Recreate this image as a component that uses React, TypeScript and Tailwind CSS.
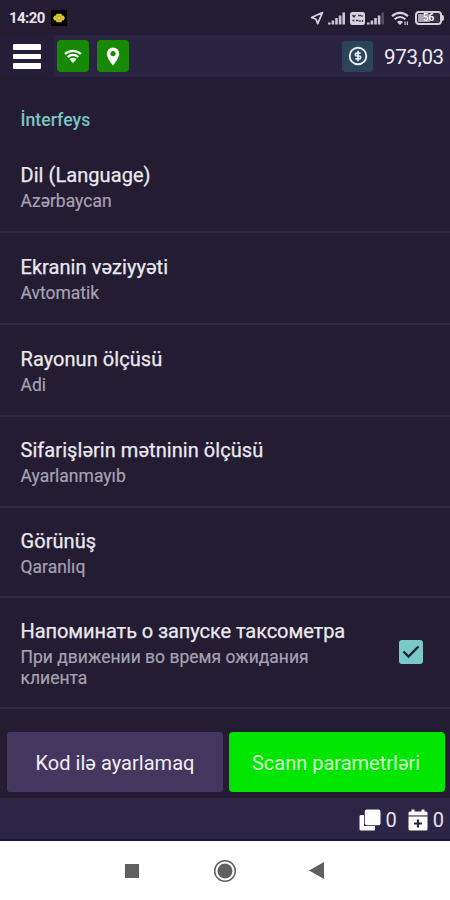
import React from "react";

const settings = [
  { title: "Dil (Language)", value: "Azərbaycan", row: "h-[92px] pt-[21px]" },
  { title: "Ekranin vəziyyəti", value: "Avtomatik", row: "h-[92px] pt-[21px]" },
  { title: "Rayonun ölçüsü", value: "Adi", row: "h-[92px] pt-[21px]" },
  { title: "Sifarişlərin mətninin ölçüsü", value: "Ayarlanmayıb", row: "h-[91px] pt-[20px]" },
  { title: "Görünüş", value: "Qaranlıq", row: "h-[90px] pt-[20px]" },
];

function SignalIcon({ weak }: { weak?: boolean }) {
  return (
    <svg width="18" height="13" viewBox="0 0 18 13" fill="#c9c5d3">
      <rect x="0" y="10.5" width="2.6" height="2" />
      <rect x="3.6" y="8.5" width="2.6" height="4" />
      <rect x="7.2" y="6" width="2.6" height="6.5" />
      <rect x="10.8" y="3.5" width="2.6" height="9" />
      <rect x="14.4" y="0.5" width="2.6" height="12" opacity={weak ? 0.3 : 1} />
    </svg>
  );
}

function StatusBar() {
  return (
    <div className="flex h-[35px] items-center pt-px pl-[9px] text-[#e6e3ee]">
      <span className="w-[36px] text-[15px] font-bold tracking-[-0.6px]">14:20</span>
      <div className="ml-[6px] flex h-4 w-4 items-center justify-center bg-black">
        <svg width="12" height="10" viewBox="0 0 12 10">
          <path d="M3.500.8h5L9 2.500h1.500L12 5l-1.500 2.500H9L8.500 9.200h-5L3 7.500H1.500L0 5l1.500-2.500H3z" fill="#d9c526" />
          <circle cx="6" cy="5" r="1.800" fill="#e9df87" stroke="#a8982a" strokeWidth="0.8" />
        </svg>
      </div>
      <div className="ml-auto flex items-center pr-[6px]">
        <svg width="14" height="14" viewBox="0 0 14 14" fill="none" stroke="#d6d3df" strokeWidth="1.700" strokeLinejoin="round">
          <path d="M12.500 1.500 1.500 6.500l4.500 1.700 1.700 4.500z" />
        </svg>
        <div className="ml-[4px] flex">
          <SignalIcon />
        </div>
        <svg className="ml-[4px]" width="15" height="13" viewBox="0 0 15 13">
          <rect width="15" height="13" rx="2.500" fill="#d6d3df" />
          <path d="M2.500 3l1.500 2 1.500-2M8 3.500h3M12 3v2M2.500 8.500h2M6 8.500h2.500M10 8v2M12.500 8v2" stroke="#3a354c" strokeWidth="1.300" fill="none" />
        </svg>
        <div className="ml-[2px] flex">
          <SignalIcon weak />
        </div>
        <svg className="ml-[6px]" width="19" height="15" viewBox="0 0 19 15" fill="none" stroke="#d6d3df" strokeWidth="2.100">
          <path d="M1 5.200c4.600-4.500 11.400-4.500 16 0M3.700 8.200c3-3 7.600-3 10.600 0" />
          <path d="M6 11c1.800-1.700 4.100-1.700 6 0L9 14z" fill="#d6d3df" stroke="none" />
          <path d="M14 10.500v3.500M16.300 10.500v3.500" strokeWidth="1.200" />
        </svg>
        <div className="ml-[5px] flex items-center">
          <div className="flex h-[14px] w-[27px] items-center justify-center rounded-[4px] border-2 border-[#d6d3df] p-px">
            <div className="flex h-full w-full items-center bg-linear-to-r from-[#aaa5b8] from-55% to-[#393249] to-55%">
              <span className="w-full text-center text-[10px] leading-none font-bold text-white [text-shadow:0_0_1px_#231c33]">56</span>
            </div>
          </div>
          <div className="h-[6px] w-[2px] rounded-r-sm bg-[#d6d3df]" />
        </div>
      </div>
    </div>
  );
}

function Header() {
  return (
    <header className="flex h-[42px] bg-[#2b2342]">
      <button className="flex w-[54px] flex-col justify-center gap-[4px] bg-[#251e38] pt-px pl-[13px]" aria-label="Menu">
        <span className="h-[5.5px] w-[28px] rounded-[1px] bg-white" />
        <span className="h-[5.5px] w-[28px] rounded-[1px] bg-white" />
        <span className="h-[5.5px] w-[28px] rounded-[1px] bg-white" />
      </button>
      <div className="flex flex-1 items-center pl-[3px]">
        <div className="flex h-8 w-8 items-center justify-center rounded-[4px] bg-[#168a06]">
          <svg width="18" height="14" viewBox="0 0 18 14" fill="none" stroke="#fff" strokeWidth="2.300">
            <path d="M1 5c4.600-4.300 11.400-4.300 16 0M3.800 8c3-2.800 7.400-2.800 10.400 0" />
            <path d="M5.500 10.200c2-1.800 5-1.800 7 0L9 14z" fill="#fff" stroke="none" />
          </svg>
        </div>
        <div className="ml-2 flex h-8 w-8 items-center justify-center rounded-[4px] bg-[#168a06]">
          <svg width="14" height="19" viewBox="0 0 14 19">
            <path fillRule="evenodd" d="M7 0.500a6.200 6.200 0 0 0-6.200 6.200C0.800 11.200 7 18.500 7 18.500s6.200-7.300 6.200-11.800A6.200 6.200 0 0 0 7 .5zM7 4a2.600 2.600 0 1 1 0 5.200A2.600 2.600 0 0 1 7 4z" fill="#fff" />
          </svg>
        </div>
        <div className="ml-auto flex h-[31px] w-[31px] items-center justify-center rounded-[3px] bg-[#2c4458]">
          <svg width="20" height="20" viewBox="0 0 20 20" fill="none" stroke="#e6edf1">
            <circle cx="10" cy="10" r="8.300" strokeWidth="1.900" />
            <path d="M12.600 7.200H8.700a1.400 1.400 0 0 0 0 2.800h2.600a1.400 1.400 0 0 1 0 2.800H7.400M10 4.800v10.400" strokeWidth="1.700" />
          </svg>
        </div>
        <span className="mr-[6px] ml-[11px] w-[60px] pt-[3px] text-[20.500px] leading-none tracking-[-0.3px] whitespace-nowrap text-[#eeebf4]">973,03</span>
      </div>
    </header>
  );
}

function BottomBar() {
  return (
    <div className="flex h-[43px] shrink-0 items-center justify-end border-b-2 border-[#1c1540] bg-[#2c2545] pt-[2px] pr-[6px] text-xl leading-none text-[#e6e3ee]">
      <svg width="22" height="22" viewBox="0 0 22 22" fill="#fff">
        <path d="M2 6h3v11h11v3.500a1 1 0 0 1-1 1H2a1.500 1.500 0 0 1-1.500-1.500V7.500A1.500 1.500 0 0 1 2 6z" />
        <rect x="5.800" y="0.500" width="15.700" height="15.700" rx="2" />
      </svg>
      <span className="ml-[5px]">0</span>
      <svg className="ml-[11px]" width="20" height="22" viewBox="0 0 20 22">
        <path d="M3.500.5h3v2h7v-2h3v2H18a1.500 1.500 0 0 1 1.500 1.500v2.200H.5V4A1.500 1.500 0 0 1 2 2.500h1.500z" fill="#fff" />
        <path d="M.5 6.200h19v1.500H.5z" fill="#8b869b" />
        <path d="M.5 7.700h19V20a1.500 1.500 0 0 1-1.500 1.500H2A1.500 1.500 0 0 1 .5 20z" fill="#fff" />
        <path d="M10 10.500v8M6 14.500h8" stroke="#2c2545" strokeWidth="2.200" />
      </svg>
      <span className="ml-[5px]">0</span>
    </div>
  );
}

export default function App() {
  return (
    <div className="flex h-[900px] w-[450px] flex-col overflow-hidden bg-[#231c33] font-[Roboto,sans-serif]">
      <StatusBar />
      <Header />

      {/* Settings list */}
      <main className="flex flex-1 flex-col">
        <h2 className="h-[64px] pt-[31px] pl-[20.500px] text-[17.700px] leading-6 font-medium text-[#7ac3c4]">İnterfeys</h2>
        {settings.map((item) => (
          <div key={item.title} className={`shrink-0 border-b-2 border-[#302941] pl-[20.500px] ${item.row}`}>
            <div className="text-[20px] leading-[26px] tracking-[0.06px] text-[#ebe9ef] [-webkit-text-stroke:0.25px_#ebe9ef]">{item.title}</div>
            <div className="text-[17.500px] leading-[26px] text-[#a6a2b0] [-webkit-text-stroke:0.2px_#a6a2b0]">{item.value}</div>
          </div>
        ))}
        <div className="flex h-[111px] shrink-0 border-b-2 border-[#302941] pt-[20px] pl-[20.500px]">
          <div className="w-[350px]">
            <div className="text-[20px] leading-[26px] tracking-[-0.08px] whitespace-nowrap text-[#ebe9ef] [-webkit-text-stroke:0.25px_#ebe9ef]">Напоминать о запуске таксометра</div>
            <div className="w-[310px] pt-[3px] text-[17.500px] leading-[21px] text-[#a6a2b0] [-webkit-text-stroke:0.2px_#a6a2b0]">При движении во время ожидания клиента</div>
          </div>
          <div className="mt-[22px] ml-[28px] flex h-6 w-6 items-center justify-center rounded-[3px] bg-[#79c9c8]">
            <svg width="18" height="14" viewBox="0 0 18 14" fill="none" stroke="#1d2533" strokeWidth="2.300">
              <path d="M1.500 6.500l5 5L16.500 1.500" />
            </svg>
          </div>
        </div>
      </main>

      {/* Actions */}
      <div className="flex h-[66px] shrink-0 gap-[6px] pl-[7px] text-[20px] text-[#f0edf6]">
        <button className="h-[60px] w-[216px] rounded-[3px] bg-[#44375f] pt-px tracking-[0.03px]">Kod ilə ayarlamaq</button>
        <button className="h-[60px] w-[216px] rounded-[4px] bg-[#00e600] pt-px pr-[2px] text-[#d4fbc9]">Scann parametrləri</button>
      </div>
      <BottomBar />

      {/* System navigation */}
      <nav className="flex h-[59px] shrink-0 items-center justify-center bg-white pr-[2px]">
        <div className="h-[14px] w-[14px] bg-[#606060]" />
        <svg className="ml-[74px]" width="24" height="24" viewBox="0 0 24 24">
          <circle cx="12" cy="12" r="10.300" fill="none" stroke="#606060" strokeWidth="1.500" />
          <circle cx="12" cy="12" r="7.500" fill="#606060" />
        </svg>
        <svg className="ml-[72px]" width="15" height="17" viewBox="0 0 15 17">
          <path d="M15 0v17L0 8.500z" fill="#606060" />
        </svg>
      </nav>
    </div>
  );
}
